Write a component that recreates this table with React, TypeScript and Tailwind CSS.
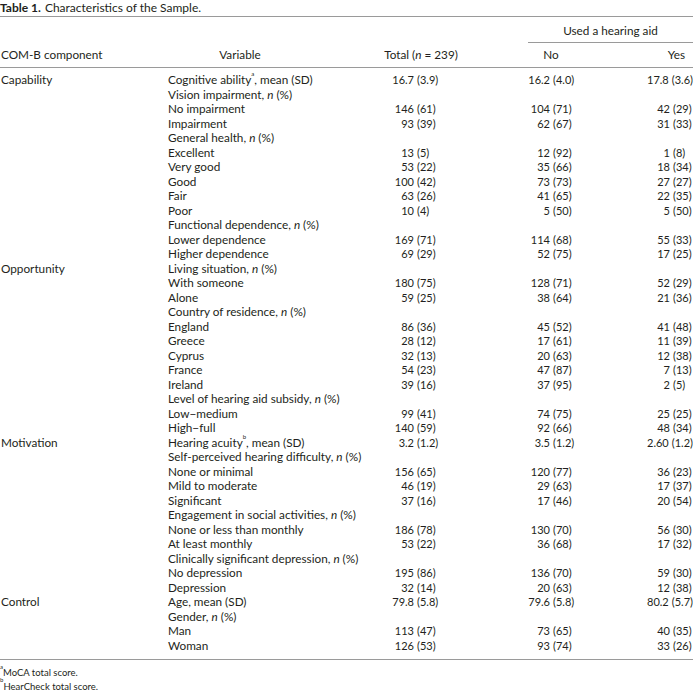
import React from "react";

type Row = {
  comp?: string;
  label: React.ReactNode;
  total?: string;
  no?: string;
  yes?: string;
};

const N = () => <span className="italic">n</span>;
const pct = (text: string) => (
  <>
    {text}, <N /> (%)
  </>
);

const rows: Row[] = [
  {
    comp: "Capability",
    label: (
      <>
        Cognitive ability<sup className="text-[6px] align-super">a</sup>, mean (SD)
      </>
    ),
    total: "16.7 (3.9)",
    no: "16.2 (4.0)",
    yes: "17.8 (3.6)",
  },
  { label: pct("Vision impairment") },
  { label: "No impairment", total: "146 (61)", no: "104 (71)", yes: "42 (29)" },
  { label: "Impairment", total: "93 (39)", no: "62 (67)", yes: "31 (33)" },
  { label: pct("General health") },
  { label: "Excellent", total: "13 (5)", no: "12 (92)", yes: "1 (8)" },
  { label: "Very good", total: "53 (22)", no: "35 (66)", yes: "18 (34)" },
  { label: "Good", total: "100 (42)", no: "73 (73)", yes: "27 (27)" },
  { label: "Fair", total: "63 (26)", no: "41 (65)", yes: "22 (35)" },
  { label: "Poor", total: "10 (4)", no: "5 (50)", yes: "5 (50)" },
  { label: pct("Functional dependence") },
  { label: "Lower dependence", total: "169 (71)", no: "114 (68)", yes: "55 (33)" },
  { label: "Higher dependence", total: "69 (29)", no: "52 (75)", yes: "17 (25)" },
  { comp: "Opportunity", label: pct("Living situation") },
  { label: "With someone", total: "180 (75)", no: "128 (71)", yes: "52 (29)" },
  { label: "Alone", total: "59 (25)", no: "38 (64)", yes: "21 (36)" },
  { label: pct("Country of residence") },
  { label: "England", total: "86 (36)", no: "45 (52)", yes: "41 (48)" },
  { label: "Greece", total: "28 (12)", no: "17 (61)", yes: "11 (39)" },
  { label: "Cyprus", total: "32 (13)", no: "20 (63)", yes: "12 (38)" },
  { label: "France", total: "54 (23)", no: "47 (87)", yes: "7 (13)" },
  { label: "Ireland", total: "39 (16)", no: "37 (95)", yes: "2 (5)" },
  { label: pct("Level of hearing aid subsidy") },
  { label: "Low\u2212medium", total: "99 (41)", no: "74 (75)", yes: "25 (25)" },
  { label: "High\u2212full", total: "140 (59)", no: "92 (66)", yes: "48 (34)" },
  {
    comp: "Motivation",
    label: (
      <>
        Hearing acuity<sup className="text-[6px] align-super">b</sup>, mean (SD)
      </>
    ),
    total: "3.2 (1.2)",
    no: "3.5 (1.2)",
    yes: "2.60 (1.2)",
  },
  { label: pct("Self-perceived hearing difficulty") },
  { label: "None or minimal", total: "156 (65)", no: "120 (77)", yes: "36 (23)" },
  { label: "Mild to moderate", total: "46 (19)", no: "29 (63)", yes: "17 (37)" },
  { label: "Significant", total: "37 (16)", no: "17 (46)", yes: "20 (54)" },
  { label: pct("Engagement in social activities") },
  { label: "None or less than monthly", total: "186 (78)", no: "130 (70)", yes: "56 (30)" },
  { label: "At least monthly", total: "53 (22)", no: "36 (68)", yes: "17 (32)" },
  { label: pct("Clinically significant depression") },
  { label: "No depression", total: "195 (86)", no: "136 (70)", yes: "59 (30)" },
  { label: "Depression", total: "32 (14)", no: "20 (63)", yes: "12 (38)" },
  { comp: "Control", label: "Age, mean (SD)", total: "79.8 (5.8)", no: "79.6 (5.8)", yes: "80.2 (5.7)" },
  { label: pct("Gender") },
  { label: "Man", total: "113 (47)", no: "73 (65)", yes: "40 (35)" },
  { label: "Woman", total: "126 (53)", no: "93 (74)", yes: "33 (26)" },
];

// value split at the parenthesis so the "(" lines up down the column
function Value({ v, numW, cellW }: { v?: string; numW: string; cellW: string }) {
  if (!v) return <div className={cellW} />;
  const i = v.indexOf(" (");
  return (
    <div className={`${cellW} flex text-[11px]`}>
      <span className={`${numW} text-right`}>{v.slice(0, i)}</span>
      <span className="pl-[3px]">{v.slice(i + 1)}</span>
    </div>
  );
}

export default function App() {
  return (
    <div
      className="w-[693px] h-[695px] bg-white text-[#231f20] text-[11.75px] overflow-hidden"
      style={{ fontFamily: "Lato, 'Open Sans', sans-serif" }}
    >
      <div className="h-[17px] leading-[16px] text-[12px] border-b border-[#9a9a9a]">
        <span className="font-bold">Table 1.</span>
        <span className="pl-[4px]">Characteristics of the Sample.</span>
      </div>

      <div className="flex h-[26px]">
        <div className="w-[528px]" />
        <div className="w-[165px] border-b border-[#9a9a9a] text-center leading-[25px] pt-[1px]">
          Used a hearing aid
        </div>
      </div>

      <div className="flex h-[25px] leading-[24px] border-b border-[#9a9a9a]">
        <div className="w-[168px] pl-[1px]">COM-B component</div>
        <div className="w-[144px] text-center">Variable</div>
        <div className="w-[218px] text-center">
          Total (<N /> = 239)
        </div>
        <div className="w-[42px] text-center">No</div>
        <div className="w-[121px] text-right pr-[8px]">Yes</div>
      </div>

      <div className="pt-[5px] pb-[6px] border-b border-[#9a9a9a]">
        {rows.map((r, idx) => (
          <div key={idx} className="flex h-[14.5px] leading-[14.5px] whitespace-nowrap">
            <div className="w-[168px] pl-[1px]">{r.comp ?? ""}</div>
            <div className="w-[212px]">{r.label}</div>
            <Value v={r.total} cellW="w-[75px]" numW="w-[34px]" />
            <Value v={r.no} cellW="w-[135px]" numW="w-[95px]" />
            <Value v={r.yes} cellW="w-[103px]" numW="w-[80px]" />
          </div>
        ))}
      </div>

      <div className="pt-[6px] leading-[13.5px] text-[9.5px]">
        <div>
          <sup className="text-[6px] align-super">a</sup>MoCA total score.
        </div>
        <div>
          <sup className="text-[6px] align-super">b</sup>HearCheck total score.
        </div>
      </div>
    </div>
  );
}
